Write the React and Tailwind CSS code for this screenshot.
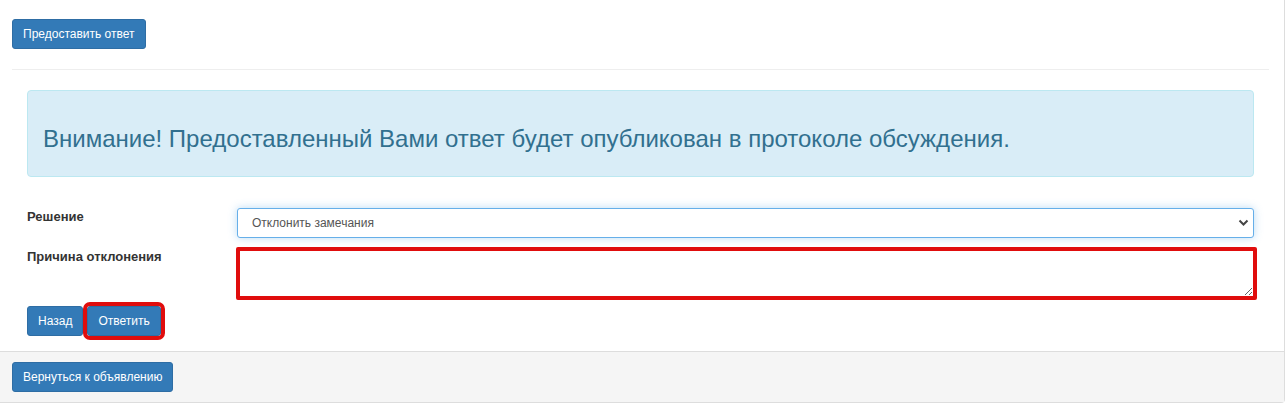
import React, { useState } from 'react';

const btn =
  'inline-block h-[30px] px-[10px] rounded-[3px] bg-[#337ab7] border border-[#2e6da4] text-white text-[12px] leading-[28px] align-top';

const App = () => {
  const [decision, setDecision] = useState('reject');
  const [reason, setReason] = useState('');

  return (
    <div className="w-[1288px] h-[408px] bg-white text-[#333] font-['Liberation_Sans',Arial,sans-serif]">
      {/* панель */}
      <div className="w-[1285px] border-r border-b border-[#ddd] rounded-br-[4px]">
        <div className="pl-3 pr-[15px] pt-[19px]">
          <button className={btn}>Предоставить ответ</button>
          <div className="mt-5 mb-5 border-t border-[#eee]" />

          <div className="px-[15px]">
            {/* предупреждение */}
            <div className="h-[87px] rounded-[4px] border border-[#bce8f1] bg-[#d9edf7] px-[15px] pt-[35px]">
              <div className="text-[24px] leading-[26px] text-[#31708f]">
                Внимание! Предоставленный Вами ответ будет опубликован в протоколе обсуждения.
              </div>
            </div>

            {/* форма */}
            <div className="mt-[31px] flex flex-col">
              <div className="flex items-start">
                <label className="w-[210px] text-[13px] leading-[18px] font-bold">Решение</label>
                <div className="relative flex-1">
                  <select
                    value={decision}
                    onChange={(e) => setDecision(e.target.value)}
                    className="appearance-none w-full h-[30px] rounded-[3px] border border-[#66afe9] bg-white pl-[14px] pr-8 text-[12px] text-[#555] outline-none shadow-[0_0_8px_rgba(102,175,233,0.45)]"
                  >
                    <option value="reject">Отклонить замечания</option>
                    <option value="accept">Принять замечания</option>
                  </select>
                  <svg
                    className="pointer-events-none absolute right-[5px] top-[10px]"
                    width="11"
                    height="9"
                    viewBox="0 0 11 9"
                  >
                    <path d="M1.5 2.5 L5.5 6.5 L9.5 2.5" fill="none" stroke="#444" strokeWidth="2" />
                  </svg>
                </div>
              </div>

              <div className="mt-[9px] flex items-start">
                <label className="w-[210px] pt-px text-[13px] leading-[18px] font-bold">Причина отклонения</label>
                <textarea
                  value={reason}
                  onChange={(e) => setReason(e.target.value)}
                  className="flex-1 mr-[-3px] -ml-px h-[53px] border-[4px] border-[#e00d0d] rounded-[2px] bg-white outline-none"
                />
              </div>

              <div className="mt-[6px] flex gap-1">
                <button className={btn}>Назад</button>
                <button className={btn + ' outline-[4px] outline-solid outline-[#e00d0d] rounded-[1px]'}>Ответить</button>
              </div>
            </div>
          </div>
        </div>

        {/* подвал панели */}
        <div className="mt-[15px] h-[51px] border-t border-[#ddd] bg-[#f5f5f5] pl-3 pt-[10px]">
          <button className={btn}>Вернуться к объявлению</button>
        </div>
      </div>
    </div>
  );
};

export default App;
